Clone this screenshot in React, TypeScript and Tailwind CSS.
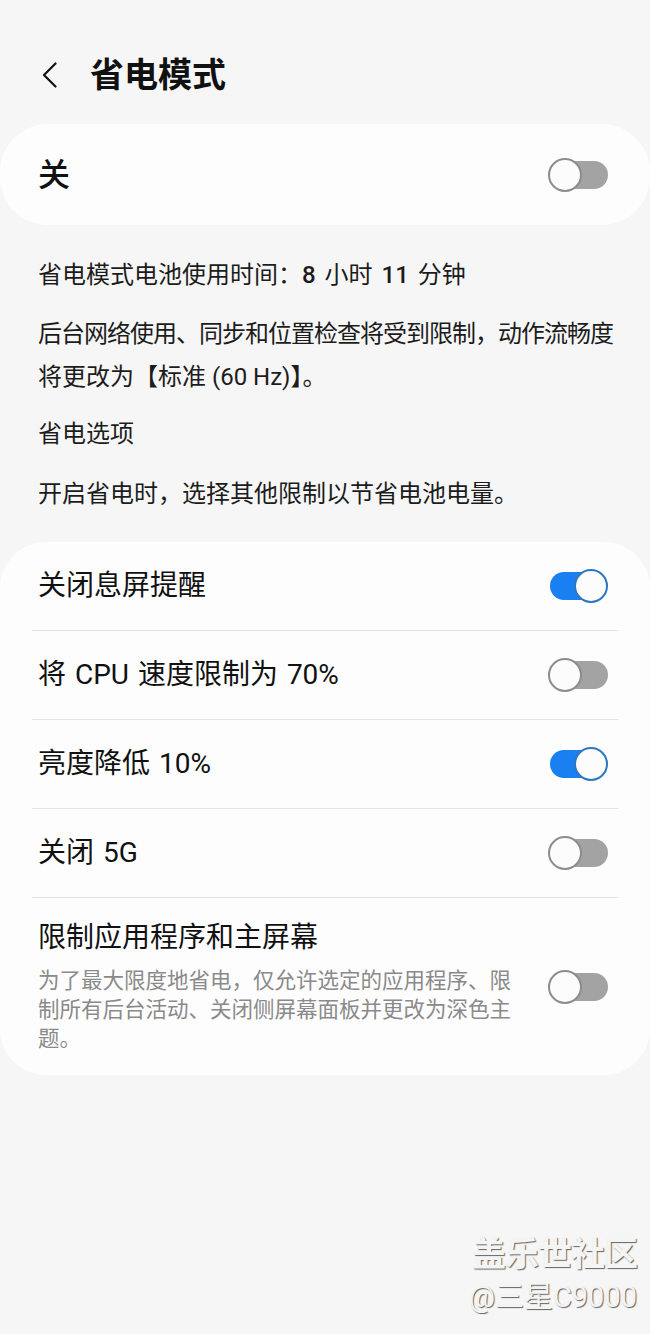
import React from "react";

function Toggle({ on }: { on: boolean }) {
  return (
    <div className="relative w-[60px] h-[34px] shrink-0">
      <div
        className={
          on
            ? "absolute left-[2px] right-[4px] top-[3px] h-[28px] rounded-full bg-[#1a7ff0]"
            : "absolute left-[4px] right-0 top-[3px] h-[28px] rounded-full bg-[#a3a3a3]"
        }
      />
      <div
        className={
          on
            ? "absolute right-0 top-0 w-[34px] h-[34px] rounded-full bg-[#fcfcfc] border-2 border-[#2f76c0]"
            : "absolute left-0 top-0 w-[34px] h-[34px] rounded-full bg-[#fcfcfc] border-2 border-[#8c8c8c]"
        }
      />
    </div>
  );
}

function Row({ title, on, last }: { title: string; on: boolean; last?: boolean }) {
  return (
    <div>
      <div className="h-[88px] flex items-center justify-between pl-[38px] pr-[42px]">
        <span className="text-[28px] text-[#111] [word-spacing:2px]">{title}</span>
        <Toggle on={on} />
      </div>
      {!last && <div className="mx-[32px] h-px bg-[#e3e3e3]" />}
    </div>
  );
}

export default function App() {
  return (
    <div
      className="relative w-[650px] min-h-[1334px] bg-[#f6f6f6] overflow-hidden"
      style={{ fontFamily: "Roboto, 'Noto Sans CJK SC', sans-serif" }}
    >
      <div className="h-[124px] pt-[50px]">
        <div className="h-[50px] flex items-center">
          <svg className="ml-[41px]" width="17" height="26" viewBox="0 0 17 26" fill="none">
            <path d="M14.5 1.5 L3 13 L14.5 24.5" stroke="#111" strokeWidth="2.2" strokeLinecap="round" strokeLinejoin="round" />
          </svg>
          <span className="ml-[32px] text-[34px] font-bold text-[#111] leading-none">省电模式</span>
        </div>
      </div>

      <div className="h-[101px] rounded-[48px] bg-[#fdfdfd] flex items-center justify-between pl-[38px] pr-[42px]">
        <span className="text-[32px] font-medium text-[#111]">关</span>
        <Toggle on={false} />
      </div>

      <div className="pl-[38px] pr-[10px] text-[24px] text-[#1c1c1c] leading-[43px]">
        <div className="mt-[29px] [word-spacing:3px]">
          省电模式电池使用时间：<span className="font-medium">8</span> 小时 <span className="font-medium">11</span> 分钟
        </div>
        <div className="mt-[16px]">
          <span className="tracking-[-1px]">后台网络使用、同步和位置检查将受到限制，动作流畅度</span>
          <br />
          将更改为【标准 (60 Hz)】。
        </div>
        <div className="mt-[14px]">省电选项</div>
        <div className="mt-[17px]">开启省电时，选择其他限制以节省电池电量。</div>
      </div>

      <div className="mt-[26px] rounded-[46px] bg-[#fdfdfd]">
        <Row title="关闭息屏提醒" on={true} />
        <Row title="将 CPU 速度限制为 70%" on={false} />
        <Row title="亮度降低 10%" on={true} />
        <Row title="关闭 5G" on={false} />
        <div className="flex items-center justify-between pl-[38px] pr-[42px] pt-[22px] pb-[22px]">
          <div className="w-[482px]">
            <div className="text-[28px] leading-[36px] text-[#111]">限制应用程序和主屏幕</div>
            <div className="mt-[10px] text-[21.5px] leading-[29px] text-[#8a8a8a]">
              为了最大限度地省电，仅允许选定的应用程序、限制所有后台活动、关闭侧屏幕面板并更改为深色主题。
            </div>
          </div>
          <Toggle on={false} />
        </div>
      </div>

      <div className="absolute right-[13px] top-[1233px] flex flex-col items-end text-[#f4f4f4] [text-shadow:1px_1px_1px_rgba(0,0,0,0.6)]">
        <span className="text-[34px] font-bold leading-[42px] tracking-[-1px]">盖乐世社区</span>
        <span className="text-[29px] leading-[44px]">@三星C9000</span>
      </div>
    </div>
  );
}
